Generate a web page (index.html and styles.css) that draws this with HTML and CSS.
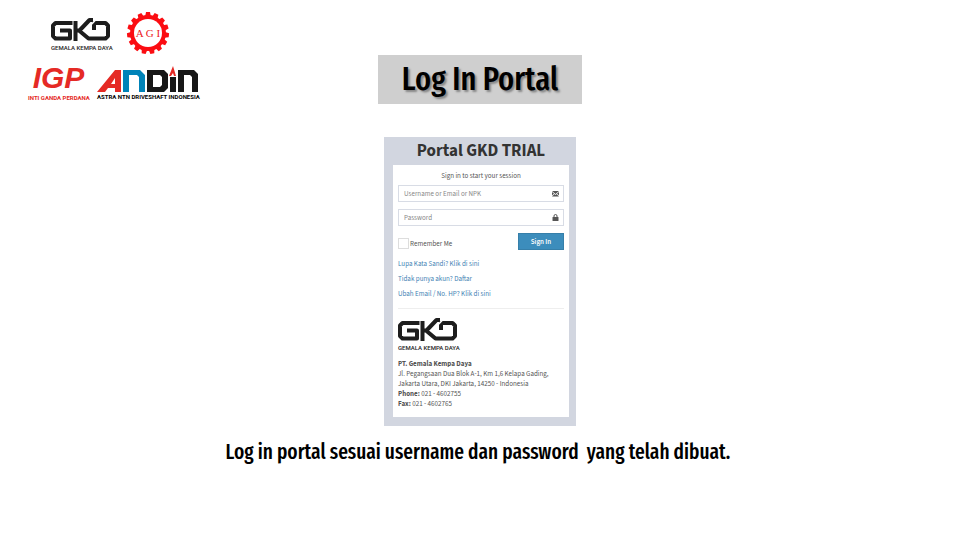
FILE: index.html
```html
<!DOCTYPE html>
<html lang="id">
<head>
<meta charset="utf-8">
<meta name="viewport" content="width=device-width, initial-scale=1">
<title>Log In Portal</title>
<link rel="stylesheet" href="styles.css">
</head>
<body>
<svg class="symbols" width="0" height="0">
  <symbol id="gkd-mark" viewBox="0 0 118 50">
    <g fill="none" stroke="currentColor" stroke-width="8" stroke-linejoin="round">
      <path d="M43 10H9L4 15V36L9 41H38V25H18"/>
      <path d="M49 6V46M52 25H57L77 4H84M56 25L75 41H109L114 36V15L109 10H86V24"/>
    </g>
    <path d="M74 20L90 3" stroke="#fff" stroke-width="3"/>
  </symbol>
</svg>
<header class="header">
  <div class="logos">
    <div class="logo-row logo-row-top">
      <div class="gkd">
        <svg class="gkd-mark" role="img" aria-label="GKD"><use href="#gkd-mark"/></svg>
        <span class="gkd-name">GEMALA KEMPA DAYA</span>
      </div>
      <svg class="agi" viewBox="0 0 44 42" role="img" aria-label="AGI">
        <g fill="#fb0d12">
          <circle cx="22" cy="21" r="18"/>
          <g id="teeth">
            <path id="tooth" d="M19 5L20 0H24L25 5Z"/>
            <use href="#tooth" transform="rotate(24 22 21)"/>
            <use href="#tooth" transform="rotate(48 22 21)"/>
            <use href="#tooth" transform="rotate(72 22 21)"/>
            <use href="#tooth" transform="rotate(96 22 21)"/>
          </g>
          <use href="#teeth" transform="rotate(120 22 21)"/>
          <use href="#teeth" transform="rotate(240 22 21)"/>
        </g>
        <circle cx="22" cy="21" r="14" fill="#fff"/>
        <text class="agi-text" x="22" y="25" text-anchor="middle">A G I</text>
      </svg>
    </div>
    <div class="logo-row">
      <div class="igp">
        <span class="igp-mark">IGP</span>
        <span class="igp-name">INTI GANDA PERDANA</span>
      </div>
      <div class="andin">
        <svg class="andin-mark" viewBox="0 0 102 27" role="img" aria-label="ANDIN">
          <path fill="#e52a25" d="M0 26L18 4H24V26H18V22H11L8 26ZM14 18H18V12Z"/>
          <path fill="#0083b8" d="M26 26V4H43L48 9V26H42V11L40 9H32V26Z"/>
          <path fill="#171717" fill-rule="evenodd" d="M50 4H67L71 8V22L67 26H50ZM56 9V21H63L65 19V11L63 9ZM73 11H79V26H73ZM81 26V4H97L101 8V26H95V11L93 9H87V26Z"/>
          <path fill="#e52a25" d="M72 10L76 0L79 10H77L76 7L74 10Z"/>
        </svg>
        <span class="andin-name">ASTRA NTN DRIVESHAFT INDONESIA</span>
      </div>
    </div>
  </div>
  <h1 class="title">Log In Portal</h1>
</header>
<main class="main">
  <section class="portal">
    <h2 class="portal-title">Portal GKD TRIAL</h2>
    <div class="card">
      <form>
        <p class="intro">Sign in to start your session</p>
        <div class="field">
          <input type="text" aria-label="Username or Email or NPK" placeholder="Username or Email or NPK">
          <svg class="field-icon" viewBox="0 0 14 14" aria-hidden="true"><path fill="#555" d="M0 2H14L7 8ZM0 4L4 7L0 11ZM14 4L10 7L14 11ZM0 13L5 8L7 10L9 8L14 13Z"/></svg>
        </div>
        <div class="field">
          <input type="password" aria-label="Password" placeholder="Password">
          <svg class="field-icon" viewBox="0 0 14 14" aria-hidden="true"><rect x="1" y="6" width="12" height="8" rx="1" fill="#555"/><path d="M4 7V4Q4 1 7 1T10 4V7" fill="none" stroke="#555" stroke-width="2"/></svg>
        </div>
        <div class="actions">
          <label class="remember"><input type="checkbox">Remember Me</label>
          <button type="submit">Sign In</button>
        </div>
      </form>
      <nav class="links">
        <a href="#lupa">Lupa Kata Sandi? Klik di sini</a>
        <a href="#daftar">Tidak punya akun? Daftar</a>
        <a href="#ubah">Ubah Email / No. HP? Klik di sini</a>
      </nav>
      <div class="gkd">
        <svg class="gkd-mark" role="img" aria-label="GKD"><use href="#gkd-mark"/></svg>
        <span class="gkd-name">GEMALA KEMPA DAYA</span>
      </div>
      <address class="address">
        <strong>PT. Gemala Kempa Daya</strong><br>
        Jl. Pegangsaan Dua Blok A-1, Km 1,6 Kelapa Gading,<br>
        Jakarta Utara, DKI Jakarta, 14250 - Indonesia<br>
        <strong>Phone:</strong> 021 - 4602755<br>
        <strong>Fax:</strong> 021 - 4602765
      </address>
    </div>
  </section>
  <p class="caption">Log in portal sesuai username dan password&nbsp; yang telah dibuat.&nbsp;</p>
</main>
</body>
</html>
```
FILE: styles.css
```css
* { box-sizing: border-box; }
body {
  margin: 0;
  background: #fff;
  color: #000;
  font-family: "Source Sans Pro", "Source Sans 3", "Noto Sans", sans-serif;
}
h1, h2, p { margin: 0; }
.symbols { display: none; }
.header {
  display: grid;
  grid-template-columns: 1fr auto 1fr;
  align-items: end;
  padding-top: 12px;
}
.logos { padding: 0 0 2px 28px; }
.logo-row { display: flex; gap: 8px; }
.logo-row-top { gap: 16px; padding-left: 23px; margin-bottom: 12px; }
.gkd { width: 59px; color: #1d1d1d; }
.logo-row-top .gkd { padding-top: 6px; }
.gkd-mark { display: block; width: 59px; height: 25px; }
.gkd-name {
  display: block;
  margin-top: 1px;
  font: 500 6px/8px Roboto, sans-serif;
  white-space: nowrap;
}
.agi { display: block; width: 44px; height: 42px; }
.agi-text { fill: #ed1c24; font: 11px "Liberation Serif", serif; }
.igp { width: 61px; color: #e52a25; text-align: center; }
.igp-mark { display: block; font: italic bold 30px/24px "Liberation Sans", sans-serif; }
.igp-name, .andin-name {
  display: block;
  font: bold 6px/8px Roboto, sans-serif;
  white-space: nowrap;
}
.igp-name { margin-top: 4px; }
.andin { width: 102px; }
.andin-mark { display: block; width: 102px; height: 27px; }
.title {
  padding: 0 24px;
  background: #cfcfcf;
  font: 500 33px/49px "Fira Sans Extra Condensed", sans-serif;
  text-shadow: 2px 2px 2px #888;
}
.main {
  display: flex;
  flex-direction: column;
  align-items: center;
  padding-top: 33px;
}
.portal {
  width: 192px;
  padding: 0 7px 9px 9px;
  background: #d2d6e0;
}
.portal-title {
  color: #333;
  font-size: 17px;
  line-height: 28px;
  text-align: center;
}
.card {
  padding: 6px 5px 4px;
  background: #fff;
  color: #555;
  font-size: 7px;
  line-height: 10px;
}
.intro { margin-bottom: 4px; text-align: center; }
.field { position: relative; margin-bottom: 7px; }
.field input {
  display: block;
  width: 100%;
  height: 17px;
  padding: 0 18px 0 5px;
  border: 1px solid #d8dce5;
  border-radius: 0;
  color: #555;
  font: inherit;
}
.field input::placeholder { color: #888; }
.field-icon { position: absolute; top: 5px; right: 5px; width: 7px; height: 7px; }
.actions { display: flex; justify-content: space-between; align-items: center; }
.remember { display: flex; align-items: center; gap: 1px; padding-top: 4px; }
.remember input {
  appearance: none;
  width: 11px;
  height: 11px;
  margin: 0;
  border: 1px solid #ddd;
}
.actions button {
  width: 46px;
  height: 17px;
  padding: 0;
  border: 1px solid #367fa9;
  background: #3c8dbc;
  color: #fff;
  font: inherit;
  font-weight: 600;
}
.links {
  display: flex;
  flex-direction: column;
  gap: 5px;
  padding: 9px 0;
  margin-bottom: 9px;
  border-bottom: 1px solid #eee;
}
.links a { color: #4383b4; text-decoration: none; }
.address { padding-top: 7px; margin-bottom: 4px; font-style: normal; white-space: nowrap; }
.caption {
  padding-top: 10px;
  font: 500 21px/33px "Fira Sans Extra Condensed", sans-serif;
}
```
